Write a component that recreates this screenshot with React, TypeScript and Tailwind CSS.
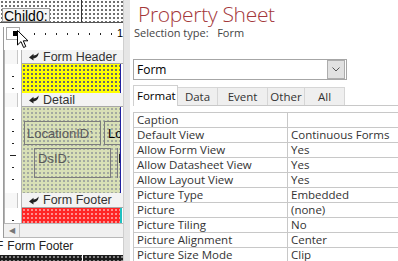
import React from "react";

const props: [string, string][] = [
  ["Caption", ""],
  ["Default View", "Continuous Forms"],
  ["Allow Form View", "Yes"],
  ["Allow Datasheet View", "Yes"],
  ["Allow Layout View", "Yes"],
  ["Picture Type", "Embedded"],
  ["Picture", "(none)"],
  ["Picture Tiling", "No"],
  ["Picture Alignment", "Center"],
  ["Picture Size Mode", "Clip"],
];

// little black "collapse" glyph on the section bars
const SectionIcon = () => (
  <svg width="10" height="9" viewBox="0 0 10 9">
    <path d="M0 5.5 L4.5 1.8 V3.5 C6.6 3.5 8.2 2.2 9.6 0.4 C9.6 3.6 7.8 6 4.5 6.2 V8.6 Z" fill="#222" />
  </svg>
);

const RulerTicks = ({ count, long }: { count: number; long?: number }) => (
  <div className="w-[18px] h-full border-l border-r border-[#b4b4b4] bg-white flex flex-col items-center pt-[12px] gap-[11px]">
    {Array.from({ length: count }).map((_, i) => (
      <span key={i} className={i === long ? "block h-px w-[6px] bg-[#222]" : "block h-px w-[2px] bg-[#222]"} />
    ))}
  </div>
);

const SectionBar = ({ label, h }: { label: string; h: string }) => (
  <div className={`flex ${h}`}>
    <div className="w-[18px] h-full border-l border-r border-[#b4b4b4] bg-white flex">
      <div className="w-[13px] h-full border-r border-[#c8c8c8] bg-[#f7f7f7]" />
    </div>
    <div className="flex-1 h-full flex items-center gap-[4px] pl-[7px] bg-[#f3f3f3] border-b border-[#a8a8a8] text-[12.5px] leading-[14px] text-[#333] whitespace-nowrap overflow-hidden">
      <SectionIcon />
      <span>{label}</span>
    </div>
  </div>
);

export default function App() {
  return (
    <div className="w-[398px] h-[261px] overflow-hidden flex bg-white font-['Liberation_Sans',sans-serif]">
      {/* form designer */}
      <div className="w-[123px] h-full flex flex-col overflow-hidden">
        <div className="h-[23px] flex border-b border-[#555] bg-white bg-[radial-gradient(circle,#222_0.6px,transparent_0.9px)] bg-size-[4px_4px]">
          <div className="w-[82px] h-full border-r border-[#333] pt-[8px] pl-[2px]">
            <div className="w-[48px] h-[14px] border border-[#9a9a9a] bg-[#f4f4f4] text-[14px] leading-[14px] text-black pl-px whitespace-nowrap">
              Child0:
            </div>
          </div>
          <div className="flex-1" />
        </div>

        <div className="h-[4px]" />

        <div className="relative flex-1 flex flex-col ml-[3px] border-l border-[#9a9a9a]">
          {/* top ruler */}
          <div className="h-[23px] flex pl-[2px]">
            <div className="w-[15px] h-[13px] border border-[#a8a8a8] bg-white flex items-center pl-[6px]">
              <span className="block w-[5px] h-[5px] bg-black" />
            </div>
            <div className="w-[3px]" />
            <div className="flex-1 h-[13px] flex items-center pl-[11px] gap-[10px] text-[11px] leading-[13px] text-black">
              {Array.from({ length: 8 }).map((_, i) => (
                <span key={i} className="block w-px h-[2px] bg-[#222]" />
              ))}
              <span className="-ml-[5px]">1</span>
            </div>
          </div>

          <SectionBar label="Form Header" h="h-[14px]" />
          <div className="h-[29px] flex">
            <RulerTicks count={2} />
            <div className="flex-1 h-full bg-[#ffff00] bg-[radial-gradient(circle,#1a1aa0_0.6px,transparent_0.9px)] bg-size-[4px_4px] border-r border-[#2020a0] mr-[2px]" />
          </div>

          <SectionBar label="Detail" h="h-[14px]" />
          <div className="h-[86px] flex">
            <RulerTicks count={6} long={3} />
            <div className="relative flex-1 h-full overflow-hidden bg-[#d8e0b6] bg-[radial-gradient(circle,#303070_0.5px,transparent_0.8px)] bg-size-[4px_4px] border-r border-[#2020a0] mr-[2px]">
              <div className="absolute left-[2px] top-[14px] w-[77px] h-[24px] border border-[#7d7d7d] text-[13px] leading-[15px] text-[#5a5a5a] pl-[2px] pt-[4px] whitespace-nowrap">
                LocationID:
              </div>
              <div className="absolute left-[82px] top-[14px] w-[30px] h-[24px] border border-[#7d7d7d] text-[13px] leading-[15px] text-black pl-[3px] pt-[4px] whitespace-nowrap">
                Lo
              </div>
              <div className="absolute left-[12px] top-[41px] w-[77px] h-[30px] border border-[#7d7d7d] text-[13px] leading-[15px] text-[#5a5a5a] pl-[3px] pt-[2px]">
                DsID:
              </div>
              <div className="absolute left-[95px] top-[41px] w-[10px] h-[30px] border-l border-[#7d7d7d] pt-[6px] pl-px">
                <span className="block w-px h-[9px] bg-[#222]" />
              </div>
            </div>
          </div>

          <SectionBar label="Form Footer" h="h-[15px]" />
          <div className="h-[15px] flex">
            <RulerTicks count={1} />
            <div className="flex-1 h-full bg-[#ff2424] bg-[radial-gradient(circle,#ffc8c8_0.6px,transparent_0.9px)] bg-size-[4px_4px] border-r-2 border-[#20c0c0] mr-px" />
          </div>

          {/* horizontal scrollbar */}
          <div className="h-[15px] flex border-t border-b border-[#b8b8b8] bg-[#f0f0f0]">
            <div className="w-[16px] h-full border-r border-[#c4c4c4] flex items-center justify-center text-[8px] leading-[13px] text-[#777]">
              ◀
            </div>
            <div className="flex-1" />
          </div>

          {/* mouse cursor */}
          <svg className="absolute left-[13px] top-[3px]" width="12" height="19" viewBox="0 0 12 19">
            <path d="M0.5 0.5 V15 L4 11.6 L6.6 17.5 L8.8 16.5 L6.3 10.8 H11 Z" fill="#fff" stroke="#000" strokeWidth="1" />
          </svg>
        </div>

        <div className="h-[17px] flex items-center bg-white text-[12px] leading-[15px] text-[#222] whitespace-nowrap overflow-hidden">
          <span className="-ml-[4px]">F</span>
          <span className="ml-[4px]">Form Footer</span>
        </div>
        <div className="h-[6px] flex bg-[#1c1c1c] bg-[radial-gradient(circle,#bbb_0.6px,transparent_0.9px)] bg-size-[4px_4px]">
          <div className="w-[83px] h-full border-r border-white" />
        </div>
      </div>

      {/* splitter */}
      <div className="w-[7px] h-full bg-[#e6e6e6] border-l border-[#cfcfcf]" />

      {/* property sheet */}
      <div className="flex-1 h-full flex flex-col pl-[3px] overflow-hidden font-['Open_Sans',sans-serif] text-[#333]">
        <div className="pl-[5px] h-[30px] pt-[2px] text-[21px] leading-[24px] tracking-[-0.3px] font-light text-[#a4373a] whitespace-nowrap">
          Property Sheet
        </div>
        <div className="pl-px h-[14px] text-[11px] leading-[14px] text-[#444] whitespace-nowrap">
          Selection type:&nbsp;&nbsp; Form
        </div>

        <div className="mt-[19px] w-[214px] h-[21px] flex items-center border border-[#a6a6a6] bg-white">
          <span className="flex-1 pl-[3px] text-[12px] leading-[16px] text-black">Form</span>
          <div className="w-[18px] h-[19px] mr-px bg-[#e1e1e1] border border-[#adadad] flex items-center justify-center">
            <svg width="8" height="5" viewBox="0 0 8 5">
              <path d="M0.5 0.5 L4 4 L7.5 0.5" fill="none" stroke="#555" strokeWidth="1" />
            </svg>
          </div>
        </div>

        <div className="mt-[5px] h-[21px] flex items-end border-b border-[#c8c8c8] text-[11.5px] leading-[14px]">
          <div className="w-[45px] h-[21px] -mb-px bg-white border border-b-0 border-[#d0d0d0] pl-[3px] pt-[3px] text-black">Format</div>
          <div className="w-[40px] h-[18px] bg-[#efefef] border-t border-r border-[#d6d6d6] text-center pt-[2px]">Data</div>
          <div className="w-[50px] h-[18px] bg-[#efefef] border-t border-r border-[#d6d6d6] text-center pt-[2px]">Event</div>
          <div className="w-[37px] h-[18px] bg-[#efefef] border-t border-r border-[#d6d6d6] text-center pt-[2px]">Other</div>
          <div className="w-[40px] h-[18px] bg-[#efefef] border-t border-r border-[#d6d6d6] text-center pt-[2px]">All</div>
        </div>

        <div className="mt-[6px] border-t border-l border-[#c8c8c8] text-[11.5px] leading-[14px]">
          {props.map(([k, v]) => (
            <div key={k} className="h-[15px] flex border-b border-[#c8c8c8]">
              <div className="w-[154px] h-full border-r border-[#c8c8c8] pl-[3px] flex items-center whitespace-nowrap overflow-hidden">{k}</div>
              <div className="flex-1 h-full pl-[3px] flex items-center whitespace-nowrap overflow-hidden">{v}</div>
            </div>
          ))}
        </div>
      </div>
    </div>
  );
}
